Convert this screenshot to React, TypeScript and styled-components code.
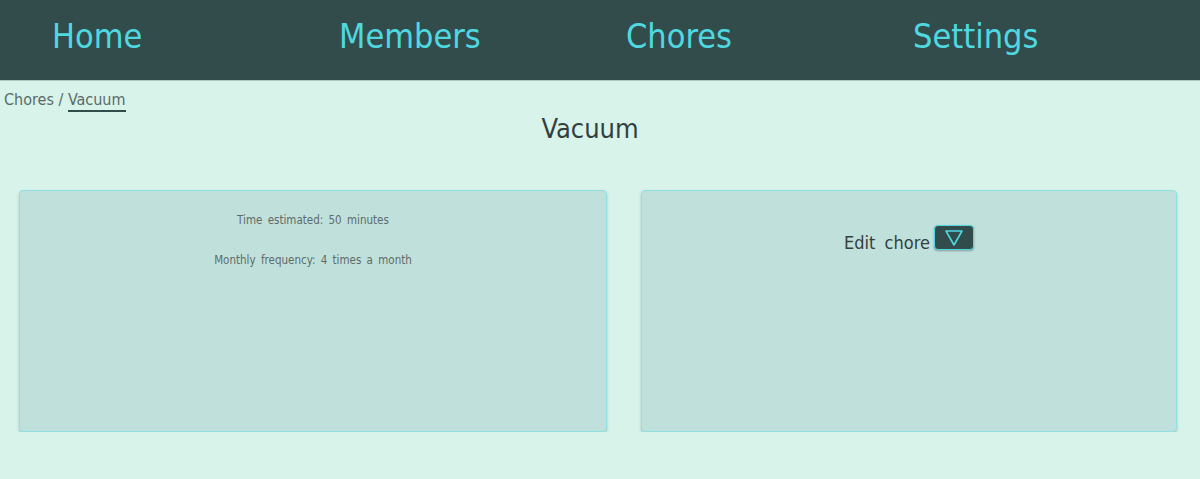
import React from "react";
import styled, { createGlobalStyle } from "styled-components";

const Global = createGlobalStyle`
  html, body { margin: 0; padding: 0; }
  body {
    background: #d7f3ea;
    font-family: "DejaVu Sans Condensed", "Liberation Sans", sans-serif;
  }
`;

const NavBar = styled.nav`
  height: 80px;
  background: #324c4c;
  border-bottom: 1px solid #a9c9c2;
  display: grid;
  grid-template-columns: repeat(4, 287px);
  padding-left: 52px;
  align-items: center;
`;

const NavLink = styled.a`
  color: #4fd8e0;
  font-size: 34px;
  font-weight: 400;
  text-decoration: none;
  line-height: 1;
  padding-bottom: 8px;
`;

const Crumbs = styled.div`
  padding: 9px 0 0 4px;
  font-size: 16px;
  color: #5c6a68;
  line-height: 20px;
`;

const CrumbCurrent = styled.span`
  border-bottom: 2px solid #324c4c;
  padding-bottom: 1px;
`;

const Title = styled.h1`
  margin: 0;
  text-align: center;
  font-size: 27px;
  font-weight: 400;
  color: #333f3e;
  line-height: 36px;
  margin-top: 1px;
  margin-left: -20px;
`;

const Cards = styled.div`
  display: grid;
  grid-template-columns: 588px 536px;
  column-gap: 34px;
  padding: 43px 0 0 19px;
`;

const Card = styled.section`
  height: 242px;
  box-sizing: border-box;
  background: #c0e0db;
  border: 1px solid #8fe0e3;
  border-radius: 4px;
  box-shadow: 0 2px 3px rgba(40, 80, 80, 0.25);
  display: flex;
  flex-direction: column;
  align-items: center;
`;

const Info = styled.p`
  margin: 0;
  font-size: 11.5px;
  color: #5f6b6a;
  word-spacing: 2px;
  line-height: 16px;
`;

const InfoList = styled.div`
  display: flex;
  flex-direction: column;
  gap: 24px;
  padding-top: 21px;
  align-items: center;
`;

const EditRow = styled.div`
  display: flex;
  align-items: center;
  gap: 4px;
  padding-top: 41px;
  font-size: 18px;
  color: #34403f;
  word-spacing: 4px;
`;

const ToggleButton = styled.button`
  width: 40px;
  height: 25px;
  margin-top: -10px;
  background: #324c4c;
  border: 1px solid #4fd8e0;
  border-radius: 4px;
  box-shadow: 0 1px 2px rgba(0, 0, 0, 0.3);
  display: flex;
  align-items: center;
  justify-content: center;
  padding: 0;
`;

export default function App() {
  return (
    <>
      <Global />
      <NavBar>
        <NavLink>Home</NavLink>
        <NavLink>Members</NavLink>
        <NavLink>Chores</NavLink>
        <NavLink>Settings</NavLink>
      </NavBar>
      <Crumbs>
        Chores / <CrumbCurrent>Vacuum</CrumbCurrent>
      </Crumbs>
      <Title>Vacuum</Title>
      <Cards>
        <Card>
          <InfoList>
            <Info>Time estimated: 50 minutes</Info>
            <Info>Monthly frequency: 4 times a month</Info>
          </InfoList>
        </Card>
        <Card>
          <EditRow>
            Edit chore
            <ToggleButton>
              <svg width="20" height="18" viewBox="0 0 20 18">
                <path d="M2 2 H18 L10 16 Z" fill="none" stroke="#4fd8e0" strokeWidth="1.6" strokeLinejoin="round" />
              </svg>
            </ToggleButton>
          </EditRow>
        </Card>
      </Cards>
    </>
  );
}
